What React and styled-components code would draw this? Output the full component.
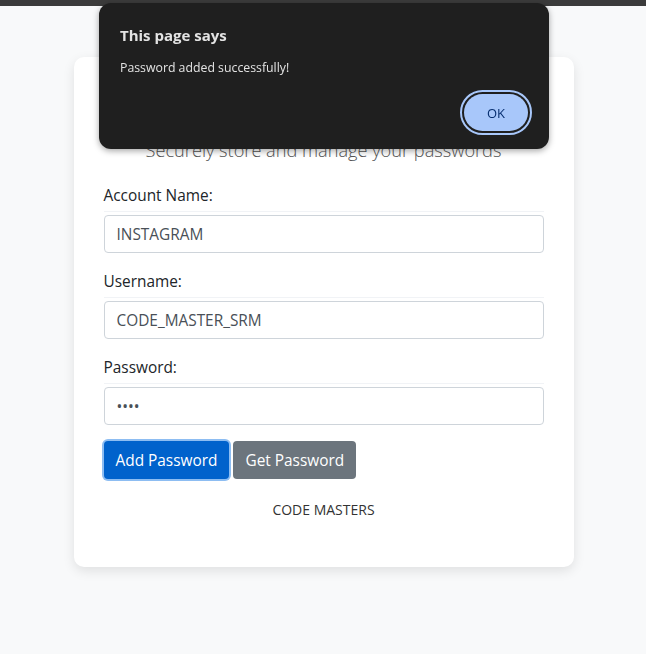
import React from 'react';
import styled, { createGlobalStyle } from 'styled-components';

const GlobalStyle = createGlobalStyle`
	body {
		margin: 0;
		background: #f8f9fa;
		font-family: "Open Sans", "Noto Sans", sans-serif;
		color: #212529;
	}
	* { box-sizing: border-box; }
`;

const TopStrip = styled.div`
	height: 6px;
	background: #3b3b3b;
`;

const Page = styled.div`
	display: flex;
	justify-content: center;
	padding: 51px 0 80px 1px;
`;

const Card = styled.div`
	width: 500px;
	background: #fff;
	border-radius: 10px;
	box-shadow: 0 4px 12px rgba(0, 0, 0, 0.1);
	padding: 30px 30px 47px;
`;

const Heading = styled.h2`
	margin: 0 0 17px;
	font-size: 28px;
	line-height: 34px;
	font-weight: 500;
	text-align: center;
	color: #343a40;
`;

const Subtitle = styled.p`
	margin: 0 0 22px;
	font-size: 18.2px;
	line-height: 24px;
	font-weight: 300;
	text-align: center;
	color: #555;
`;

const Label = styled.label`
	display: block;
	font-size: 15.4px;
	line-height: 24px;
	padding-bottom: 3px;
	border-bottom: 1px solid #f1f3f6;
	margin-bottom: 3px;
`;

const Input = styled.input`
	display: block;
	width: 100%;
	height: 38px;
	padding: 6px 12px;
	font-family: inherit;
	font-size: 15.4px;
	color: #495057;
	border: 1px solid #ced4da;
	border-radius: 4px;
	margin-bottom: ${p => (p.$last ? '16px' : '17px')};
	background: #fff;
	outline: none;
`;

const ButtonRow = styled.div`
	display: flex;
	gap: 4px;
`;

const Button = styled.button`
	height: 38px;
	padding: 6px 12px;
	font-family: inherit;
	font-size: 15.4px;
	color: #fff;
	border: none;
	border-radius: 4px;
	background: ${p => (p.$variant === 'primary' ? '#0062cc' : '#6c757d')};
	box-shadow: ${p => (p.$focused ? '0 0 0 2px #8dbdf2' : 'none')};
	cursor: pointer;
`;

const Footer = styled.p`
	margin: 21px 0 0;
	font-size: 14px;
	line-height: 20px;
	text-align: center;
	color: #333;
`;

const Dialog = styled.div`
	position: fixed;
	top: 3px;
	left: 99px;
	width: 450px;
	height: 146px;
	background: #1f1f1f;
	border-radius: 12px;
	box-shadow: 0 2px 6px rgba(0, 0, 0, 0.35);
	padding: 21px 21px 20px 21px;
	color: #e3e3e3;
	display: flex;
	flex-direction: column;
`;

const DialogTitle = styled.div`
	font-size: 15px;
	line-height: 22px;
	font-weight: 700;
`;

const DialogMessage = styled.div`
	margin-top: 13px;
	font-size: 12.3px;
	line-height: 18px;
`;

const DialogActions = styled.div`
	margin-top: 17px;
	display: flex;
	justify-content: flex-end;
`;

const OkButton = styled.button`
	width: 64px;
	height: 37px;
	border: none;
	border-radius: 999px;
	background: #a8c7fa;
	color: #062e6f;
	font-family: inherit;
	font-size: 13px;
	outline: 2px solid #a8c7fa;
	outline-offset: 2px;
`;

export default function App() {
	return (
		<>
			<GlobalStyle />
			<TopStrip />
			<Page>
				<Card>
					<Heading>Password Manager</Heading>
					<Subtitle>Securely store and manage your passwords</Subtitle>
					<Label>Account Name:</Label>
					<Input defaultValue="INSTAGRAM" />
					<Label>Username:</Label>
					<Input defaultValue="CODE_MASTER_SRM" />
					<Label>Password:</Label>
					<Input type="password" defaultValue="1234" $last />
					<ButtonRow>
						<Button $variant="primary" $focused>Add Password</Button>
						<Button>Get Password</Button>
					</ButtonRow>
					<Footer>CODE MASTERS</Footer>
				</Card>
			</Page>
			<Dialog>
				<DialogTitle>This page says</DialogTitle>
				<DialogMessage>Password added successfully!</DialogMessage>
				<DialogActions>
					<OkButton>OK</OkButton>
				</DialogActions>
			</Dialog>
		</>
	);
}
